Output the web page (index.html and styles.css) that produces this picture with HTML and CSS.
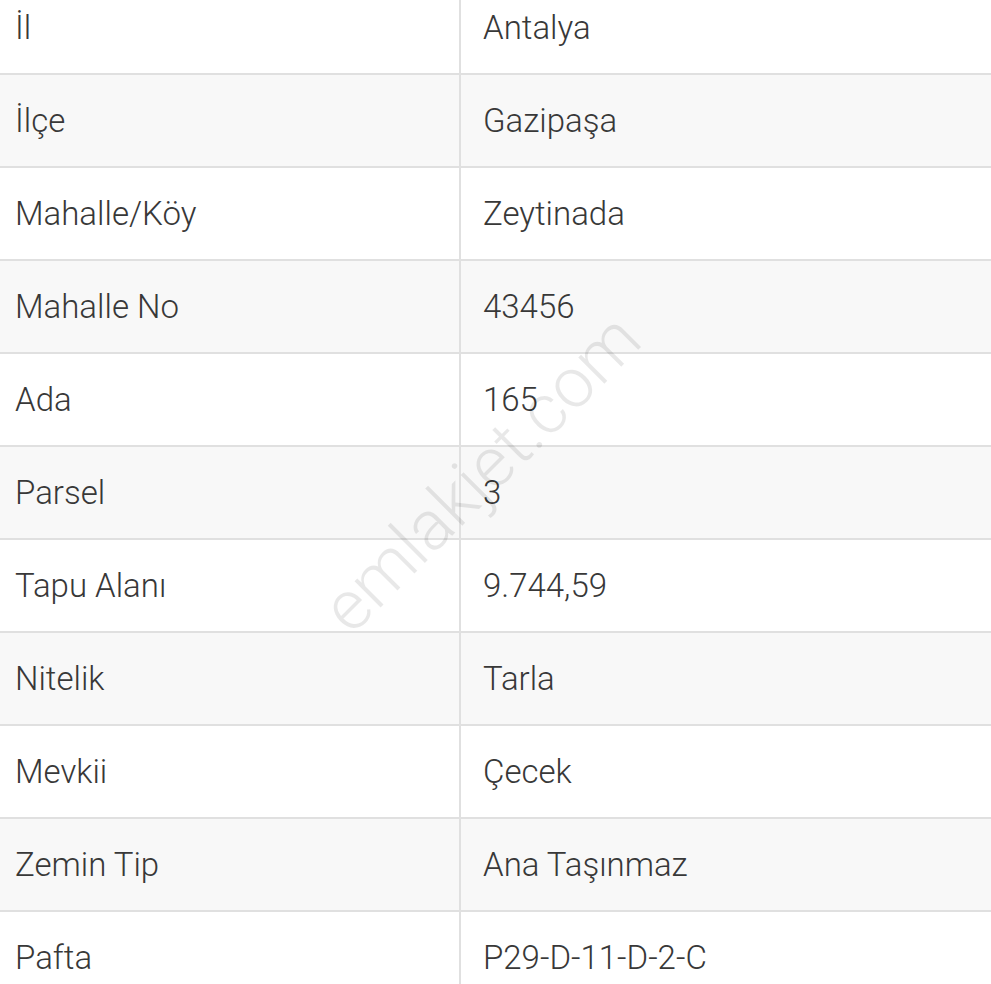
FILE: index.html
```html
<!DOCTYPE html>
<html lang="tr">
<head>
<meta charset="utf-8">
<link rel="stylesheet" href="styles.css">
</head>
<body>
<div class="wrap">
  <div class="table">
    <div class="row"><div class="k">İl</div><div class="v">Antalya</div></div>
    <div class="row alt"><div class="k">İlçe</div><div class="v">Gazipaşa</div></div>
    <div class="row"><div class="k">Mahalle/Köy</div><div class="v">Zeytinada</div></div>
    <div class="row alt"><div class="k">Mahalle No</div><div class="v">43456</div></div>
    <div class="row"><div class="k">Ada</div><div class="v">165</div></div>
    <div class="row alt"><div class="k">Parsel</div><div class="v">3</div></div>
    <div class="row"><div class="k">Tapu Alanı</div><div class="v">9.744,59</div></div>
    <div class="row alt"><div class="k">Nitelik</div><div class="v">Tarla</div></div>
    <div class="row"><div class="k">Mevkii</div><div class="v">Çecek</div></div>
    <div class="row alt"><div class="k">Zemin Tip</div><div class="v">Ana Taşınmaz</div></div>
    <div class="row"><div class="k">Pafta</div><div class="v">P29-D-11-D-2-C</div></div>
  </div>
  <div class="watermark">emlakjet.com</div>
</div>
</body>
</html>
```

FILE: styles.css
```css
html, body {
  margin: 0;
  padding: 0;
  background: #fff;
  overflow: hidden;
}
.wrap {
  position: relative;
  width: 991px;
  height: 984px;
  overflow: hidden;
}
.table {
  margin-top: -18px;
  font-family: Roboto, "Noto Sans", sans-serif;
  font-weight: 300;
  font-size: 33px;
  color: #383838;
}
.row {
  display: grid;
  grid-template-columns: 459px 1fr;
  height: 93px;
  box-sizing: border-box;
  border-bottom: 2px solid #e0e0e0;
  background: #fff;
}
.row.alt {
  background: #f8f8f8;
}
.k, .v {
  display: flex;
  align-items: center;
}
.k {
  padding-left: 15px;
}
.v {
  border-left: 2px solid #e0e0e0;
  padding-left: 22px;
}
.watermark {
  position: absolute;
  left: 481px;
  top: 473px;
  transform: translate(-50%, -50%) rotate(-45deg);
  font-family: Roboto, sans-serif;
  font-weight: 300;
  font-size: 70px;
  color: rgba(0, 0, 0, 0.09);
  white-space: nowrap;
  pointer-events: none;
}
```
